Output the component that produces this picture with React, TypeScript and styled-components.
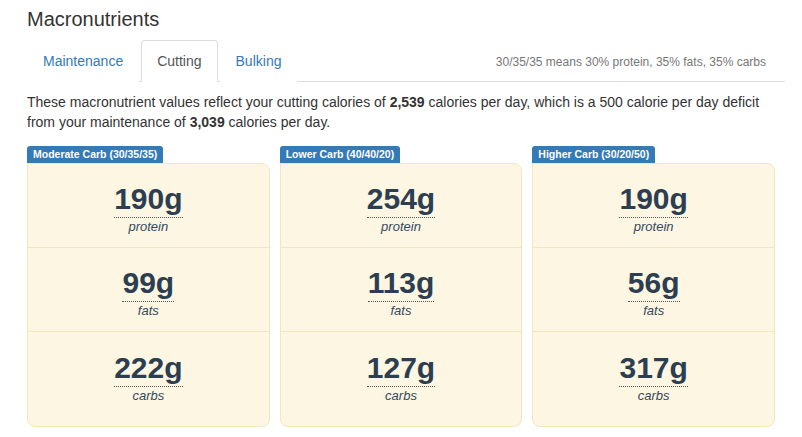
import React, { useState } from "react";
import styled, { createGlobalStyle } from "styled-components";

const GlobalStyle = createGlobalStyle`
  body {
    margin: 0;
    background: #fff;
    font-family: "Liberation Sans", Arial, sans-serif;
    font-size: 14px;
    line-height: 20px;
    color: #333;
  }
`;

const Page = styled.div`
  padding: 0 17px 0 27px;
`;

const Title = styled.h3`
  margin: 8px 0 10px;
  font-size: 20px;
  line-height: 22px;
  font-weight: 400;
  color: #333;
`;

const TabBar = styled.div`
  display: flex;
  align-items: flex-end;
  border-bottom: 1px solid #ddd;
  height: 41px;
`;

const Tab = styled.button<{ $active?: boolean }>`
  font: inherit;
  font-size: 14px;
  line-height: 20px;
  padding: 10px 15px;
  margin: 0 2px -1px 0;
  border: 1px solid ${(p) => (p.$active ? "#ddd" : "transparent")};
  border-bottom-color: transparent;
  border-radius: 4px 4px 0 0;
  background: #fff;
  color: ${(p) => (p.$active ? "#555" : "#337ab7")};
  cursor: pointer;

  &:hover {
    background: ${(p) => (p.$active ? "#fff" : "#eee")};
  }
`;

const Hint = styled.span`
  margin-left: auto;
  align-self: center;
  padding: 3px 19px 0 0;
  font-size: 12px;
  color: #777;
`;

const Intro = styled.p`
  margin: 10px 0 14px;
`;

const Columns = styled.div`
  display: grid;
  grid-template-columns: repeat(3, 1fr);
`;

const Column = styled.div`
  display: flex;
  flex-direction: column;
  align-items: flex-start;
  padding-right: 10px;
`;

const Badge = styled.span`
  background: #337ab7;
  color: #fff;
  font-weight: 700;
  font-size: 10.5px;
  line-height: 17px;
  padding: 0 6px;
  border-radius: 3px 3px 0 0;
`;

const Panel = styled.div`
  align-self: stretch;
  background: #fcf6e3;
  border: 1px solid #f3e6bf;
  border-radius: 0 8px 8px 8px;
  padding-bottom: 10px;
`;

const Row = styled.div`
  text-align: center;
  padding: 17px 0 11px;
  & + & {
    border-top: 1px solid #f3e6bf;
  }
  &:last-child {
    padding-top: 18px;
  }
`;

const Amount = styled.abbr`
  display: inline-block;
  font-size: 30px;
  line-height: 36px;
  font-weight: 700;
  color: #2c3e50;
  text-decoration: none;
  border-bottom: 1px dotted #555;
  cursor: help;
`;

const Nutrient = styled.div`
  font-size: 13px;
  line-height: 18px;
  font-style: italic;
  color: #34495e;
`;

type Plan = { name: string; protein: number; fats: number; carbs: number };

const plans: Plan[] = [
  { name: "Moderate Carb (30/35/35)", protein: 190, fats: 99, carbs: 222 },
  { name: "Lower Carb (40/40/20)", protein: 254, fats: 113, carbs: 127 },
  { name: "Higher Carb (30/20/50)", protein: 190, fats: 56, carbs: 317 },
];

const tabs = ["Maintenance", "Cutting", "Bulking"];

export default function App() {
  const [active, setActive] = useState("Cutting");

  return (
    <Page>
      <GlobalStyle />
      <Title>Macronutrients</Title>
      <TabBar>
        {tabs.map((t) => (
          <Tab key={t} $active={t === active} onClick={() => setActive(t)}>
            {t}
          </Tab>
        ))}
        <Hint>30/35/35 means 30% protein, 35% fats, 35% carbs</Hint>
      </TabBar>
      <Intro>
        These macronutrient values reflect your cutting calories of <b>2,539</b> calories per day,
        which is a 500 calorie per day deficit from your maintenance of <b>3,039</b> calories per day.
      </Intro>
      <Columns>
        {plans.map((p) => (
          <Column key={p.name}>
            <Badge>{p.name}</Badge>
            <Panel>
              <Row>
                <Amount title={`${p.protein} grams of protein`}>{p.protein}g</Amount>
                <Nutrient>protein</Nutrient>
              </Row>
              <Row>
                <Amount title={`${p.fats} grams of fats`}>{p.fats}g</Amount>
                <Nutrient>fats</Nutrient>
              </Row>
              <Row>
                <Amount title={`${p.carbs} grams of carbs`}>{p.carbs}g</Amount>
                <Nutrient>carbs</Nutrient>
              </Row>
            </Panel>
          </Column>
        ))}
      </Columns>
    </Page>
  );
}
